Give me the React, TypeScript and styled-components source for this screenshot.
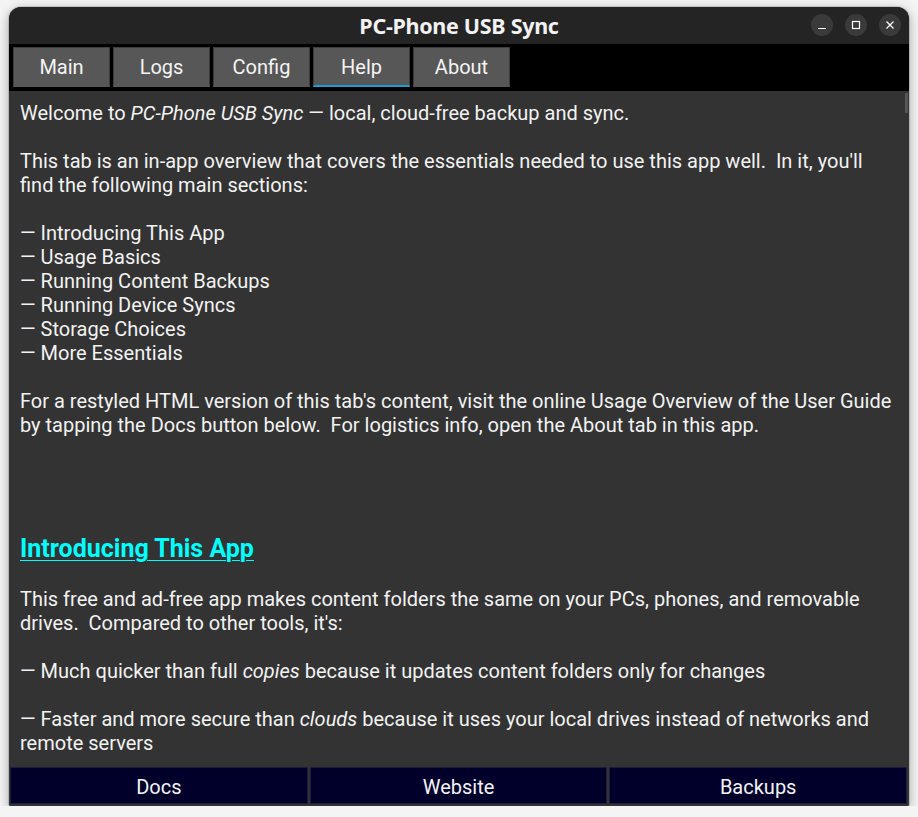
import React from "react";
import styled, { createGlobalStyle } from "styled-components";

const GlobalStyle = createGlobalStyle`
  html, body {
    margin: 0;
    padding: 0;
    background: #f4f4f4;
  }
  body {
    font-family: Roboto, "Noto Sans", sans-serif;
  }
`;

const Window = styled.div`
  margin: 7px 0 0 9px;
  width: 900px;
  height: 799px;
  display: flex;
  flex-direction: column;
  background: #333;
  border-radius: 12px 12px 2px 2px;
  overflow: hidden;
  box-shadow: 0 3px 12px rgba(0, 0, 0, 0.35), 0 0 0 1px rgba(0, 0, 0, 0.12);
`;

const TitleBar = styled.div`
  position: relative;
  height: 37px;
  flex: none;
  display: flex;
  align-items: center;
  justify-content: center;
  background: #242424;
  color: #f2f2f2;
  font-family: "Noto Sans", "DejaVu Sans", sans-serif;
  font-weight: 700;
  font-size: 21.5px;
  letter-spacing: -0.3px;
`;

const WinControls = styled.div`
  position: absolute;
  right: 8px;
  top: 7px;
  display: flex;
  gap: 12px;
`;

const WinButton = styled.div`
  width: 22px;
  height: 22px;
  border-radius: 50%;
  background: #3a3a3a;
  display: flex;
  align-items: center;
  justify-content: center;
`;

const TabBar = styled.div`
  flex: none;
  height: 47px;
  box-sizing: border-box;
  padding: 3px 3px 0 4px;
  background: #000;
  display: flex;
  gap: 3px;
`;

const Tab = styled.div<{ $active?: boolean }>`
  flex: none;
  width: 97px;
  height: 40px;
  box-sizing: border-box;
  background: #575757;
  border: 1px solid #3c3c3c;
  border-bottom: 2px solid ${(p) => (p.$active ? "#1f9bd7" : "#575757")};
  color: #f4f4f4;
  font-size: 20px;
  display: flex;
  align-items: center;
  justify-content: center;
`;

const Content = styled.div`
  position: relative;
  flex: 1;
  overflow: hidden;
  padding: 10px 0 0 11px;
  color: #f2f2f2;
  font-size: 20px;
  line-height: 24px;
`;

const ScrollThumb = styled.div`
  position: absolute;
  right: 1px;
  top: 2px;
  width: 3px;
  height: 20px;
  background: #555;
`;

const Para = styled.p`
  margin: 0 0 24px 0;
`;

const Line = styled.div``;

const Heading = styled.h2`
  margin: 96px 0 22px 0;
  font-size: 25px;
  line-height: 32px;
  font-weight: 700;
  color: #00ffff;
  text-decoration: underline;
  text-underline-offset: 3px;
  text-decoration-thickness: 1px;
`;

const Footer = styled.div`
  flex: none;
  height: 40px;
  box-sizing: border-box;
  padding: 1px 2px 2px 1px;
  background: #333;
  display: flex;
  gap: 2px;
`;

const FootButton = styled.div`
  flex: 1;
  box-sizing: border-box;
  padding-top: 2px;
  background: #00002a;
  border: 1px solid #1c1c3c;
  color: #f4f4f4;
  font-size: 20px;
  display: flex;
  align-items: center;
  justify-content: center;
`;

const tabs = ["Main", "Logs", "Config", "Help", "About"];

export default function App() {
  return (
    <>
      <GlobalStyle />
      <Window>
        <TitleBar>
          PC-Phone USB Sync
          <WinControls>
            <WinButton>
              <svg width="10" height="10" viewBox="0 0 10 10">
                <path d="M1 8.5h8" stroke="#fff" strokeWidth="1.2" />
              </svg>
            </WinButton>
            <WinButton>
              <svg width="10" height="10" viewBox="0 0 10 10">
                <rect x="1.5" y="1.5" width="7" height="7" fill="none" stroke="#fff" strokeWidth="1.2" />
              </svg>
            </WinButton>
            <WinButton>
              <svg width="10" height="10" viewBox="0 0 10 10">
                <path d="M1.5 1.5l7 7M8.5 1.5l-7 7" stroke="#fff" strokeWidth="1.3" />
              </svg>
            </WinButton>
          </WinControls>
        </TitleBar>
        <TabBar>
          {tabs.map((t) => (
            <Tab key={t} $active={t === "Help"}>
              {t}
            </Tab>
          ))}
        </TabBar>
        <Content>
          <ScrollThumb />
          <Para>
            Welcome to <i>PC-Phone USB Sync</i> — local, cloud-free backup and sync.
          </Para>
          <Para>
            This tab is an in-app overview that covers the essentials needed to use this app well.&nbsp; In it, you'll
            <br />
            find the following main sections:
          </Para>
          <Para>
            <Line>— Introducing This App</Line>
            <Line>— Usage Basics</Line>
            <Line>— Running Content Backups</Line>
            <Line>— Running Device Syncs</Line>
            <Line>— Storage Choices</Line>
            <Line>— More Essentials</Line>
          </Para>
          <Para>
            For a restyled HTML version of this tab's content, visit the online Usage Overview of the User Guide
            <br />
            by tapping the Docs button below.&nbsp; For logistics info, open the About tab in this app.
          </Para>
          <Heading>Introducing This App</Heading>
          <Para>
            This free and ad-free app makes content folders the same on your PCs, phones, and removable
            <br />
            drives.&nbsp; Compared to other tools, it's:
          </Para>
          <Para>
            — Much quicker than full <i>copies</i> because it updates content folders only for changes
          </Para>
          <Para>
            — Faster and more secure than <i>clouds</i> because it uses your local drives instead of networks and
            <br />
            remote servers
          </Para>
        </Content>
        <Footer>
          <FootButton>Docs</FootButton>
          <FootButton>Website</FootButton>
          <FootButton>Backups</FootButton>
        </Footer>
      </Window>
    </>
  );
}
